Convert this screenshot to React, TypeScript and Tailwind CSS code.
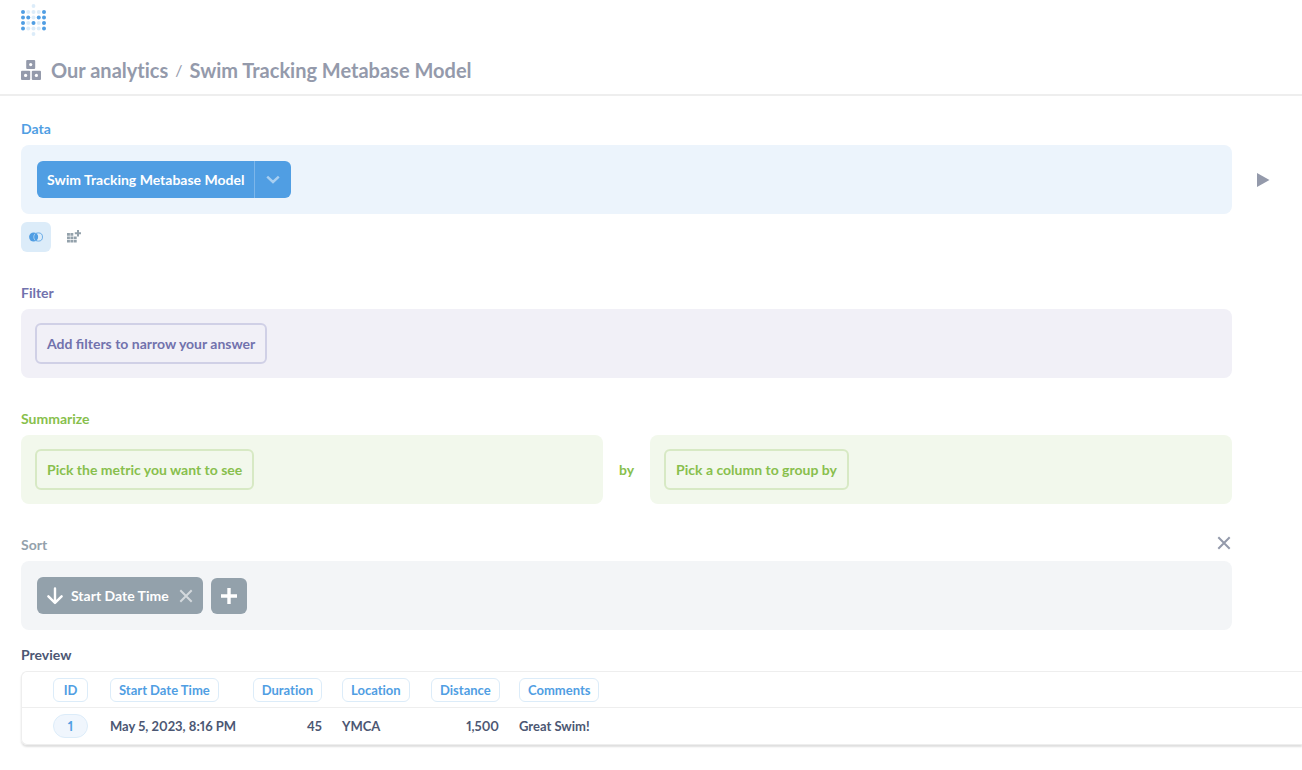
import type { ReactNode } from "react";

const LOGO_COLUMNS = [2, 7.25, 12.5, 17.75, 23];
const LOGO_ROWS = ["10001", "11011", "10101", "10001"];

function Logo() {
  return (
    <svg width="25" height="32" viewBox="0 0 25 32" aria-hidden="true">
      <circle cx="12.5" cy="2" r="1.9" fill="#509ee3" fillOpacity="0.2" />
      {LOGO_ROWS.map((row, r) =>
        LOGO_COLUMNS.map((x, c) => (
          <circle
            key={`${r}-${c}`}
            cx={x}
            cy={8 + r * 5.5}
            r="2"
            fill="#509ee3"
            fillOpacity={row[c] === "1" ? 1 : 0.2}
          />
        )),
      )}
      <circle cx="12.5" cy="30" r="1.9" fill="#509ee3" fillOpacity="0.2" />
    </svg>
  );
}

function ModelIcon() {
  return (
    <svg width="20" height="20" viewBox="0 0 20 20" aria-hidden="true">
      <g fill="currentColor">
        <rect x="5.2" y="0" width="9" height="9" rx="1" />
        <rect x="0" y="10.8" width="9.2" height="9.2" rx="1" />
        <rect x="10.8" y="10.8" width="9.2" height="9.2" rx="1" />
      </g>
      <g fill="#ffffff">
        <circle cx="9.7" cy="4.6" r="1.6" />
        <circle cx="4.6" cy="15.4" r="1.6" />
        <circle cx="15.4" cy="15.4" r="1.6" />
      </g>
    </svg>
  );
}

function ChevronDownIcon() {
  return (
    <svg width="14" height="14" viewBox="0 0 14 14" fill="none" stroke="currentColor" strokeWidth="2.4" aria-hidden="true">
      <path d="M1.2 3.6 7 9l5.8-5.4" />
    </svg>
  );
}

function JoinIcon() {
  return (
    <svg width="14" height="10" viewBox="0 0 14 10" aria-hidden="true">
      <circle cx="4.6" cy="5" r="4.5" fill="#509ee3" />
      <circle cx="9.4" cy="5" r="4.1" fill="none" stroke="#509ee3" strokeWidth="0.8" />
      <path d="M6.2 1.6a4.8 4.8 0 0 0 0 6.8" fill="none" stroke="#dcecf9" strokeWidth="0.6" />
      <path d="M7.2 1.6a4.6 4.6 0 0 1 0 6.8 4.6 4.6 0 0 1 0-6.8z" fill="#509ee3" />
    </svg>
  );
}

function CustomColumnIcon() {
  return (
    <svg width="14" height="14" viewBox="0 0 14 14" fill="currentColor" aria-hidden="true">
      <path d="M0 3h2.9v2.7H0zM3.4 3h2.9v2.7H3.4zM0 6.4h2.9v2.7H0zM3.4 6.4h2.9v2.7H3.4zM6.8 6.4h2.9v2.7H6.8zM0 9.8h2.9v2.7H0zM3.4 9.8h2.9v2.7H3.4zM6.8 9.8h2.9v2.7H6.8z" />
      <path d="M10 0h2v2.2h2v2h-2v2.2h-2V4.2H7.8v-2H10z" />
    </svg>
  );
}

function PlayIcon() {
  return (
    <svg width="14" height="14" viewBox="0 0 14 14" fill="currentColor" aria-hidden="true">
      <path d="M1 0v14l12.5-7z" />
    </svg>
  );
}

function CloseIcon() {
  return (
    <svg width="14" height="14" viewBox="0 0 14 14" fill="none" stroke="currentColor" strokeWidth="2" aria-hidden="true">
      <path d="m1.3 1.3 11.4 11.4M12.7 1.3 1.3 12.7" />
    </svg>
  );
}

function ArrowDownIcon() {
  return (
    <svg width="16" height="18" viewBox="0 0 16 18" fill="none" stroke="currentColor" strokeWidth="2.4" strokeLinecap="round" strokeLinejoin="round" aria-hidden="true">
      <path d="M8 1.5v14M1.4 9.3 8 15.9l6.6-6.6" />
    </svg>
  );
}

function PlusIcon() {
  return (
    <svg width="16" height="16" viewBox="0 0 16 16" fill="currentColor" aria-hidden="true">
      <path d="M6.3 0h3.4v6.3H16v3.4H9.7V16H6.3V9.7H0V6.3h6.3z" />
    </svg>
  );
}

type StepProps = {
  title: string;
  titleClass: string;
  action?: ReactNode;
  side?: ReactNode;
  footer?: ReactNode;
  children: ReactNode;
};

function Step({ title, titleClass, action, side, footer, children }: StepProps) {
  return (
    <section>
      <div className="mr-[49px] mb-2 flex h-[17px] items-start justify-between">
        <h2 className={`text-sm leading-[17px] font-bold ${titleClass}`}>{title}</h2>
        {action}
      </div>
      <div className="flex items-center">
        <div className="flex min-w-0 flex-1 items-center">{children}</div>
        <div className="flex w-[49px] shrink-0 justify-center pl-3">{side}</div>
      </div>
      {footer}
    </section>
  );
}

function EmptyCell({ className, children }: { className: string; children: ReactNode }) {
  return (
    <button type="button" className={`rounded-md border-2 px-2.5 py-2.5 text-sm leading-[17px] font-bold ${className}`}>
      {children}
    </button>
  );
}

const COLUMNS = [
  { name: "ID", width: "w-[78px]", align: "text-right" },
  { name: "Start Date Time", width: "w-[141px]", align: "text-left" },
  { name: "Duration", width: "w-[91px]", align: "text-right" },
  { name: "Location", width: "w-[89px]", align: "text-left" },
  { name: "Distance", width: "w-[88px]", align: "text-right" },
  { name: "Comments", width: "", align: "text-left" },
];

const ROWS = [["1", "May 5, 2023, 8:16 PM", "45", "YMCA", "1,500", "Great Swim!"]];

function PreviewTable() {
  return (
    <div className="overflow-hidden rounded-l-md border-y border-l border-[#eeeeee] shadow-[0_2px_2px_rgba(0,0,0,0.13)]">
      <table className="w-full table-fixed border-separate border-spacing-0 text-[13px] leading-4 font-bold text-[#4c5773] proportional-nums [font-variant-ligatures:none]">
        <thead>
          <tr>
            {COLUMNS.map((column, i) => (
              <th
                key={column.name}
                scope="col"
                className={`h-9 border-b border-[#eeeeee] py-0 ${i === 0 ? "pr-3 pl-0" : "px-2.5"} ${column.width} ${column.align}`}
              >
                <button
                  type="button"
                  className="h-6 min-w-[35px] rounded-md border border-[#dcecf9] px-2 align-middle whitespace-nowrap text-[#509ee3]"
                >
                  {column.name}
                </button>
              </th>
            ))}
          </tr>
        </thead>
        <tbody>
          {ROWS.map((row) => (
            <tr key={row[0]}>
              {row.map((value, i) => (
                <td
                  key={COLUMNS[i].name}
                  className={`h-9 py-0 whitespace-nowrap ${i === 0 ? "pr-3 pl-0" : "px-2.5"} ${COLUMNS[i].align}`}
                >
                  {i === 0 ? (
                    <a
                      href="#1"
                      className="inline-flex h-6 w-[35px] items-center justify-center rounded-full border border-[#dcecf9] bg-[#f0f6fd] align-middle text-[#509ee3]"
                    >
                      {value}
                    </a>
                  ) : (
                    value
                  )}
                </td>
              ))}
            </tr>
          ))}
        </tbody>
      </table>
    </div>
  );
}

export default function App() {
  return (
    <div className="min-h-screen bg-white font-['Lato',sans-serif] text-[#4c5773]">
      <header className="border-b-2 border-[#eeeeee] px-[21px]">
        <a href="#home" aria-label="Home" className="flex h-10 items-center">
          <Logo />
        </a>
        <nav
          aria-label="Breadcrumb"
          className="flex h-[54px] items-center pt-1.5 text-xl leading-6 font-bold text-[#949aab] [font-variant-ligatures:none]"
        >
          <ModelIcon />
          <a href="#analytics" className="ml-2.5">Our analytics</a>
          <span className="mx-[7px] text-base font-normal">/</span>
          <h1>Swim Tracking Metabase Model</h1>
        </nav>
      </header>

      <main className="pt-6 pb-6 pl-[21px]">
        <div className="flex flex-col gap-8 pr-[21px]">
          <Step
            title="Data"
            titleClass="text-[#509ee3]"
            side={
              <button type="button" aria-label="Preview results" className="text-[#949aab]">
                <PlayIcon />
              </button>
            }
            footer={
              <div className="mt-2 flex gap-2">
                <button type="button" aria-label="Join data" className="flex size-[30px] items-center justify-center rounded-md bg-[#dcecf9]">
                  <JoinIcon />
                </button>
                <button type="button" aria-label="Custom column" className="flex size-[30px] items-center justify-center rounded-md text-[#93a1ab]">
                  <CustomColumnIcon />
                </button>
              </div>
            }
          >
            <div className="flex flex-1 rounded-lg bg-[#ecf4fc] p-4">
              <div className="flex overflow-hidden rounded-md bg-[#509ee3] text-white">
                <button type="button" className="p-2.5 text-sm leading-[17px] font-bold">
                  Swim Tracking Metabase Model
                </button>
                <button
                  type="button"
                  aria-label="Pick columns"
                  className="flex w-[37px] items-center justify-center border-l border-white/25 text-white/50"
                >
                  <ChevronDownIcon />
                </button>
              </div>
            </div>
          </Step>

          <Step title="Filter" titleClass="text-[#7172ad]">
            <div className="flex flex-1 rounded-lg bg-[#f1f0f7] p-3.5">
              <EmptyCell className="border-[#d0d0e6] text-[#7172ad]">Add filters to narrow your answer</EmptyCell>
            </div>
          </Step>

          <Step title="Summarize" titleClass="text-[#88bf4d]">
            <div className="flex flex-1 rounded-lg bg-[#f2f8ec] p-3.5">
              <EmptyCell className="border-[#d7e9c4] text-[#88bf4d]">Pick the metric you want to see</EmptyCell>
            </div>
            <span className="mx-4 text-sm leading-[17px] font-bold text-[#88bf4d]">by</span>
            <div className="flex flex-1 rounded-lg bg-[#f2f8ec] p-3.5">
              <EmptyCell className="border-[#d7e9c4] text-[#88bf4d]">Pick a column to group by</EmptyCell>
            </div>
          </Step>

          <Step
            title="Sort"
            titleClass="text-[#93a1ab]"
            action={
              <button type="button" aria-label="Remove sort step" className="px-px text-[#949aab]">
                <CloseIcon />
              </button>
            }
          >
            <div className="flex flex-1 items-center gap-2 rounded-lg bg-[#f3f5f7] p-4">
              <div className="flex h-[37px] items-center rounded-md bg-[#93a1ab] px-2.5 text-white">
                <button type="button" className="flex items-center gap-2 text-sm leading-[17px] font-bold">
                  <ArrowDownIcon />
                  Start Date Time
                </button>
                <button type="button" aria-label="Remove Start Date Time" className="ml-2.5 text-white/60">
                  <CloseIcon />
                </button>
              </div>
              <button type="button" aria-label="Add sort" className="flex size-9 items-center justify-center rounded-md bg-[#93a1ab] text-white">
                <PlusIcon />
              </button>
            </div>
          </Step>
        </div>

        <section className="mt-4">
          <h2 className="mb-2 text-sm leading-[17px] font-bold">Preview</h2>
          <PreviewTable />
        </section>
      </main>
    </div>
  );
}
